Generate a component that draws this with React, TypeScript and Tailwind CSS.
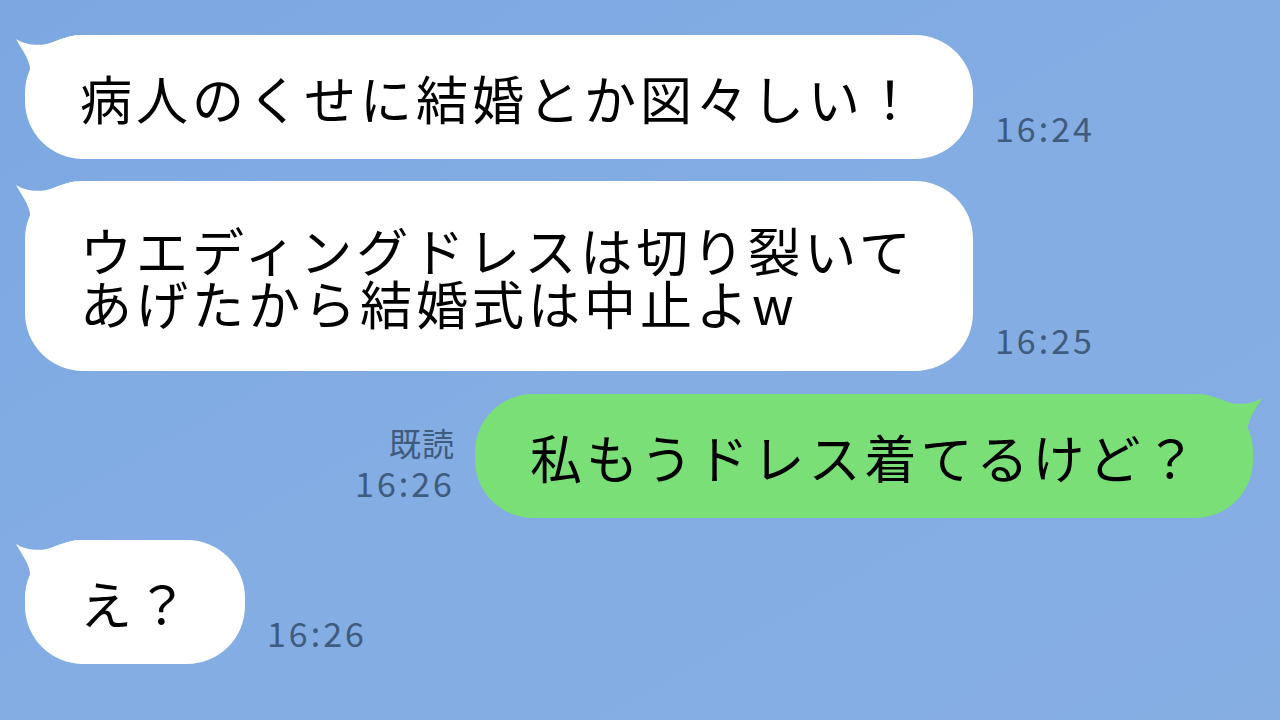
import React from 'react';

type Side = 'left' | 'right';

const jp = "font-['Noto_Sans_CJK_JP','Noto_Sans',sans-serif]";

function Tail({ side, color }: { side: Side; color: string }): JSX.Element {
  return (
    <svg
      className={side === 'left' ? 'absolute -left-[12px] -top-[4px]' : 'absolute -right-[12px] -top-[4px] -scale-x-100'}
      width="80"
      height="80"
      viewBox="0 0 80 80"
    >
      <path
        d="M3 8 C 12 14, 28 16, 40 11 C 50 7, 58 5, 64 4 L 72 40 L 14 72 L 12 66 C 13 58, 18 45, 17 36 C 15 26, 8 17, 3 8 Z"
        fill={color}
      />
    </svg>
  );
}

function Time({ children, className }: { children: React.ReactNode; className?: string }): JSX.Element {
  return (
    <div className={`${jp} text-[34px] leading-[34px] tracking-[3px] text-[#3f5b7d] ${className ?? ''}`}>{children}</div>
  );
}

function Received({ lines, width, height, time }: { lines: string[]; width: string; height: string; time: string }): JSX.Element {
  return (
    <div className="flex items-end gap-[22px] pl-[25px]">
      <div className={`relative flex flex-col justify-center rounded-[58px] bg-white pl-[55px] ${width} ${height}`}>
        <Tail side="left" color="#ffffff" />
        {lines.map(line => (
          <div key={line} className={`${jp} relative whitespace-nowrap text-[52px] leading-[53px] tracking-[4px] text-black`}>
            {line}
          </div>
        ))}
      </div>
      <Time className="mb-[14px]">{time}</Time>
    </div>
  );
}

export default function App(): JSX.Element {
  return (
    <div className="relative flex h-[720px] w-[1280px] flex-col overflow-hidden bg-linear-to-br from-[#7ca7e1] via-[#84ade4] to-[#86aee3]">
      <div className="mt-[35px]">
        <Received lines={['病人のくせに結婚とか図々しい！']} width="w-[948px]" height="h-[124px]" time="16:24" />
      </div>
      <div className="mt-[22px]">
        <Received
          lines={['ウエディングドレスは切り裂いて', 'あげたから結婚式は中止よw']}
          width="w-[948px]"
          height="h-[190px]"
          time="16:25"
        />
      </div>
      <div className="mt-[23px] flex items-end justify-end gap-[20px] pr-[27px]">
        <div className="mb-[18px] flex flex-col items-end gap-[6px]">
          <div className={`${jp} text-[32px] leading-[36px] tracking-[1px] text-[#3f5b7d]`}>既読</div>
          <Time>16:26</Time>
        </div>
        <div className="relative flex h-[124px] w-[778px] items-center rounded-[58px] bg-[#7adf76] pl-[55px]">
          <Tail side="right" color="#7adf76" />
          <div className={`${jp} relative whitespace-nowrap text-[52px] leading-[53px] tracking-[4px] text-black`}>
            私もうドレス着てるけど？
          </div>
        </div>
      </div>
      <div className="mt-[22px]">
        <Received lines={['え？']} width="w-[220px]" height="h-[124px]" time="16:26" />
      </div>
    </div>
  );
}
